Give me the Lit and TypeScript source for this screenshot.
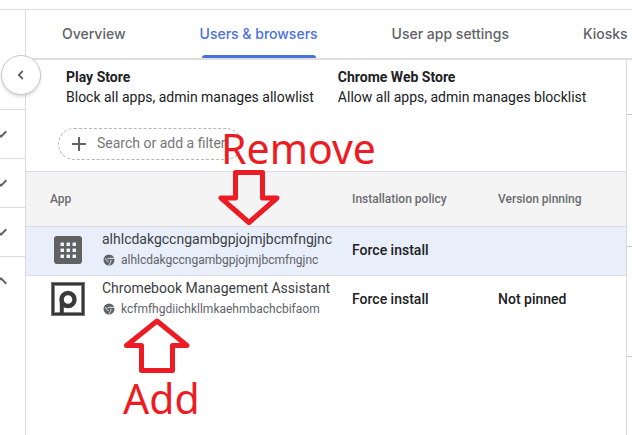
import { LitElement, html, svg, css } from "lit";
import { customElement, state } from "lit/decorators.js";

interface AppRow {
  name: string;
  id: string;
  policy: string;
  pinning: string;
  icon: "grid" | "letter";
}

const ROWS: AppRow[] = [
  {
    name: "alhlcdakgccngambgpjojmjbcmfngjnc",
    id: "alhlcdakgccngambgpjojmjbcmfngjnc",
    policy: "Force install",
    pinning: "",
    icon: "grid",
  },
  {
    name: "Chromebook Management Assistant",
    id: "kcfmfhgdiichkllmkaehmbachcbifaom",
    policy: "Force install",
    pinning: "Not pinned",
    icon: "letter",
  },
];

const TABS = ["Overview", "Users & browsers", "User app settings", "Kiosks"];

const MORE = "M16.59 8.59 12 13.17 7.41 8.59 6 10l6 6 6-6z";
const LESS = "M12 8l-6 6 1.41 1.41L12 10.83l4.59 4.58L18 14z";

@customElement("app-root")
export class AppRoot extends LitElement {
  static styles = css`
    :host {
      display: block;
      position: relative;
      box-sizing: border-box;
      min-height: 100vh;
      padding-top: 9px;
      overflow: hidden;
      background: #fff;
      color: #202124;
      font: 14px/20px Roboto, "Liberation Sans", sans-serif;
    }
    * {
      box-sizing: border-box;
    }
    svg {
      display: block;
      flex: none;
    }
    button {
      border: 0;
      margin: 0;
      background: none;
      font: inherit;
      color: inherit;
      cursor: pointer;
    }
    .shell {
      display: grid;
      grid-template-columns: 26px minmax(0, 1fr);
      min-height: calc(100vh - 9px);
      border-top: 1px solid #dadce0;
    }
    .filters {
      padding-top: 51px;
      border-right: 1px solid #dadce0;
      overflow: hidden;
    }
    .group {
      display: flex;
      align-items: center;
      justify-content: flex-end;
      width: 100%;
      height: 49px;
      padding: 0 12px 0 0;
      border-top: 1px solid #dadce0;
      color: #5f6368;
    }
    .spacer {
      height: 48px;
    }
    .collapse {
      position: absolute;
      left: 1px;
      top: 55px;
      z-index: 2;
      display: flex;
      align-items: center;
      justify-content: center;
      width: 40px;
      height: 40px;
      padding: 0;
      border: 1px solid #c6c8cb;
      border-radius: 50%;
      background: #fff;
      color: #5f6368;
      box-shadow: 0 2px 3px rgba(60, 64, 67, 0.18);
    }
    .tabs {
      display: flex;
      gap: 74px;
      height: 50px;
      padding-left: 36px;
      border-bottom: 2px solid #dfdfdf;
      overflow: hidden;
    }
    .tab {
      position: relative;
      flex: none;
      height: 48px;
      padding: 0;
      color: #5f6368;
      font: 500 14px/20px Inter, Roboto, sans-serif;
    }
    .tab.active {
      color: #4a71dc;
    }
    .tab.active::after {
      content: "";
      position: absolute;
      left: 2px;
      right: 2px;
      bottom: 0;
      height: 3px;
      border-radius: 3px 3px 0 0;
      background: #4a71dc;
    }
    .body {
      display: grid;
      grid-template-columns: minmax(0, 1fr) 6px;
      min-height: calc(100vh - 60px);
    }
    .summary {
      display: flex;
      gap: 24px;
      padding: 7px 40px 0;
    }
    .store {
      flex: none;
      margin: 0;
    }
    .store dt {
      font-weight: 700;
    }
    .store dd {
      margin: 0;
    }
    .search {
      display: flex;
      align-items: center;
      gap: 6px;
      width: 184px;
      height: 32px;
      margin: 21px 0 11px 32px;
      padding: 0 12px 0 8px;
      border: 1px dashed #b4b6b9;
      border-radius: 16px;
      color: #5f6368;
    }
    .search input {
      width: 100%;
      min-width: 0;
      height: 20px;
      margin-bottom: 2px;
      padding: 0;
      border: 0;
      outline: 0;
      background: none;
      font: inherit;
      color: inherit;
    }
    .search input::placeholder {
      color: #757779;
      opacity: 1;
    }
    table {
      width: 100%;
      table-layout: fixed;
      border-spacing: 0;
    }
    .c-app {
      width: 302px;
    }
    .c-policy {
      width: 146px;
    }
    th,
    td {
      padding: 0 0 0 24px;
      border-top: 1px solid #dadce0;
      text-align: left;
      vertical-align: middle;
      font-weight: 500;
    }
    th {
      height: 55px;
      background: #f4f4f4;
      color: #6a6c6f;
      font-size: 12px;
    }
    td {
      height: 49px;
      padding-bottom: 2px;
    }
    tr.selected td {
      background: #e8eefa;
    }
    .app {
      display: flex;
      align-items: center;
      gap: 16px;
      font-weight: 400;
    }
    .name {
      color: #3c4043;
      white-space: nowrap;
    }
    .ident {
      display: flex;
      align-items: center;
      gap: 6px;
      padding-left: 1px;
      color: #5f6368;
      font-size: 12px;
      line-height: 22px;
    }
    .rail {
      border-left: 1px solid #dadce0;
    }
    .rail div {
      border-bottom: 1px solid #c4c6c9;
    }
    .r1 {
      height: 55px;
    }
    .r2 {
      height: 132px;
    }
    .r3 {
      height: 110px;
    }
    .note {
      position: absolute;
      z-index: 3;
      color: #ed1c24;
      font: 41px/48px "Noto Sans", "Open Sans", sans-serif;
      pointer-events: none;
    }
    .remove {
      left: 221px;
      top: 124px;
    }
    .add {
      left: 123px;
      top: 374px;
    }
    .arrow {
      position: absolute;
      z-index: 3;
      fill: none;
      stroke: #ed1c24;
      stroke-width: 5;
      stroke-linejoin: round;
      pointer-events: none;
    }
    .down {
      left: 218px;
      top: 168px;
    }
    .up {
      left: 123px;
      top: 317px;
    }
  `;

  @state() private active = 1;

  private chevron(d: string) {
    return html`<svg width="24" height="24" viewBox="0 0 24 24" fill="currentColor" aria-hidden="true">
      <path d=${d} />
    </svg>`;
  }

  private appIcon(kind: AppRow["icon"]) {
    if (kind === "grid") {
      const steps = [12, 18, 24];
      return html`<svg width="36" height="36" viewBox="0 0 36 36" aria-hidden="true">
        <rect x="4" y="4" width="28" height="28" rx="3" fill="#616161" />
        ${steps.map((y) =>
          steps.map((x) => svg`<rect x=${x - 1.5} y=${y - 1.5} width="3.5" height="3.5" rx=".5" fill="#eef2fb" />`)
        )}
      </svg>`;
    }
    return html`<svg width="36" height="36" viewBox="0 0 36 36" fill="none" aria-hidden="true">
      <rect x="1.5" y="1.5" width="33" height="33" stroke="#777" />
      <rect x="3" y="3" width="30" height="30" stroke="#353535" stroke-width="2" />
      <rect x="4.5" y="4.5" width="27" height="27" stroke="#8a8a8a" />
      <path d="M11.800 32V18.500" stroke="#3a3a3a" stroke-width="4" />
      <circle cx="18" cy="18.500" r="6.500" stroke="#3a3a3a" stroke-width="4.400" />
    </svg>`;
  }

  private chromeIcon() {
    return html`<svg width="12" height="12" viewBox="0 0 12 12" aria-hidden="true">
      <circle cx="6" cy="6" r="5.500" fill="#5f6368" />
      <path d="M2.400 4.200C3.200 6 4 7.600 5.600 7.800M11.500 4.300H6.200A2 2 0 0 0 4.200 5.600M8 5.800C8.200 7.600 7.200 9 6 10.800" fill="none" stroke="#e6e9ee" />
    </svg>`;
  }

  render() {
    return html`
      <div class="shell">
        <nav class="filters" aria-label="Sections">
          <div class="spacer"></div>
          ${[MORE, MORE, MORE, LESS].map(
            (d) => html`<button class="group" aria-label="Toggle section">${this.chevron(d)}</button>`
          )}
        </nav>
        <main>
          <div class="tabs" role="tablist">
            ${TABS.map(
              (t, i) => html`<button
                class="tab ${i === this.active ? "active" : ""}"
                role="tab"
                aria-selected=${i === this.active}
                @click=${() => (this.active = i)}
              >${t}</button>`
            )}
          </div>
          <div class="body">
            <section>
              <div class="summary">
                <dl class="store">
                  <dt>Play Store</dt>
                  <dd>Block all apps, admin manages allowlist</dd>
                </dl>
                <dl class="store">
                  <dt>Chrome Web Store</dt>
                  <dd>Allow all apps, admin manages blocklist</dd>
                </dl>
              </div>
              <label class="search">
                <svg width="24" height="24" viewBox="0 0 24 24" stroke="currentColor" stroke-width="2" aria-hidden="true">
                  <path d="M12 5v14M5 12h14" />
                </svg>
                <input type="text" placeholder="Search or add a filter" aria-label="Search or add a filter" />
              </label>
              <table>
                <colgroup>
                  <col class="c-app" />
                  <col class="c-policy" />
                  <col />
                </colgroup>
                <thead>
                  <tr>
                    <th scope="col">App</th>
                    <th scope="col">Installation policy</th>
                    <th scope="col">Version pinning</th>
                  </tr>
                </thead>
                <tbody>
                  ${ROWS.map(
                    (r, i) => html`<tr class=${i === 0 ? "selected" : ""}>
                      <td>
                        <div class="app">
                          ${this.appIcon(r.icon)}
                          <div>
                            <div class="name">${r.name}</div>
                            <div class="ident">${this.chromeIcon()}<span>${r.id}</span></div>
                          </div>
                        </div>
                      </td>
                      <td>${r.policy}</td>
                      <td>${r.pinning}</td>
                    </tr>`
                  )}
                </tbody>
              </table>
            </section>
            <aside class="rail">
              <div class="r1"></div>
              <div class="r2"></div>
              <div class="r3"></div>
            </aside>
          </div>
        </main>
      </div>

      <button class="collapse" aria-label="Collapse panel">
        <svg width="16" height="16" viewBox="0 0 16 16" fill="none" stroke="currentColor" stroke-width="1.800" aria-hidden="true">
          <path d="M9.800 4 5.800 8l4 4" />
        </svg>
      </button>

      <svg class="arrow down" width="62" height="60" viewBox="0 0 62 60" aria-hidden="true">
        <path d="M17.500 4.500h27v25.500H59L31 54.500 3 30h14.500z" />
      </svg>
      <svg class="arrow up" width="68" height="58" viewBox="0 0 68 58" aria-hidden="true">
        <path d="M34 4 64 28.500H49.500V53.500h-31V28.500H3.500z" />
      </svg>
      <span class="note remove">Remove</span>
      <span class="note add">Add</span>
    `;
  }
}
